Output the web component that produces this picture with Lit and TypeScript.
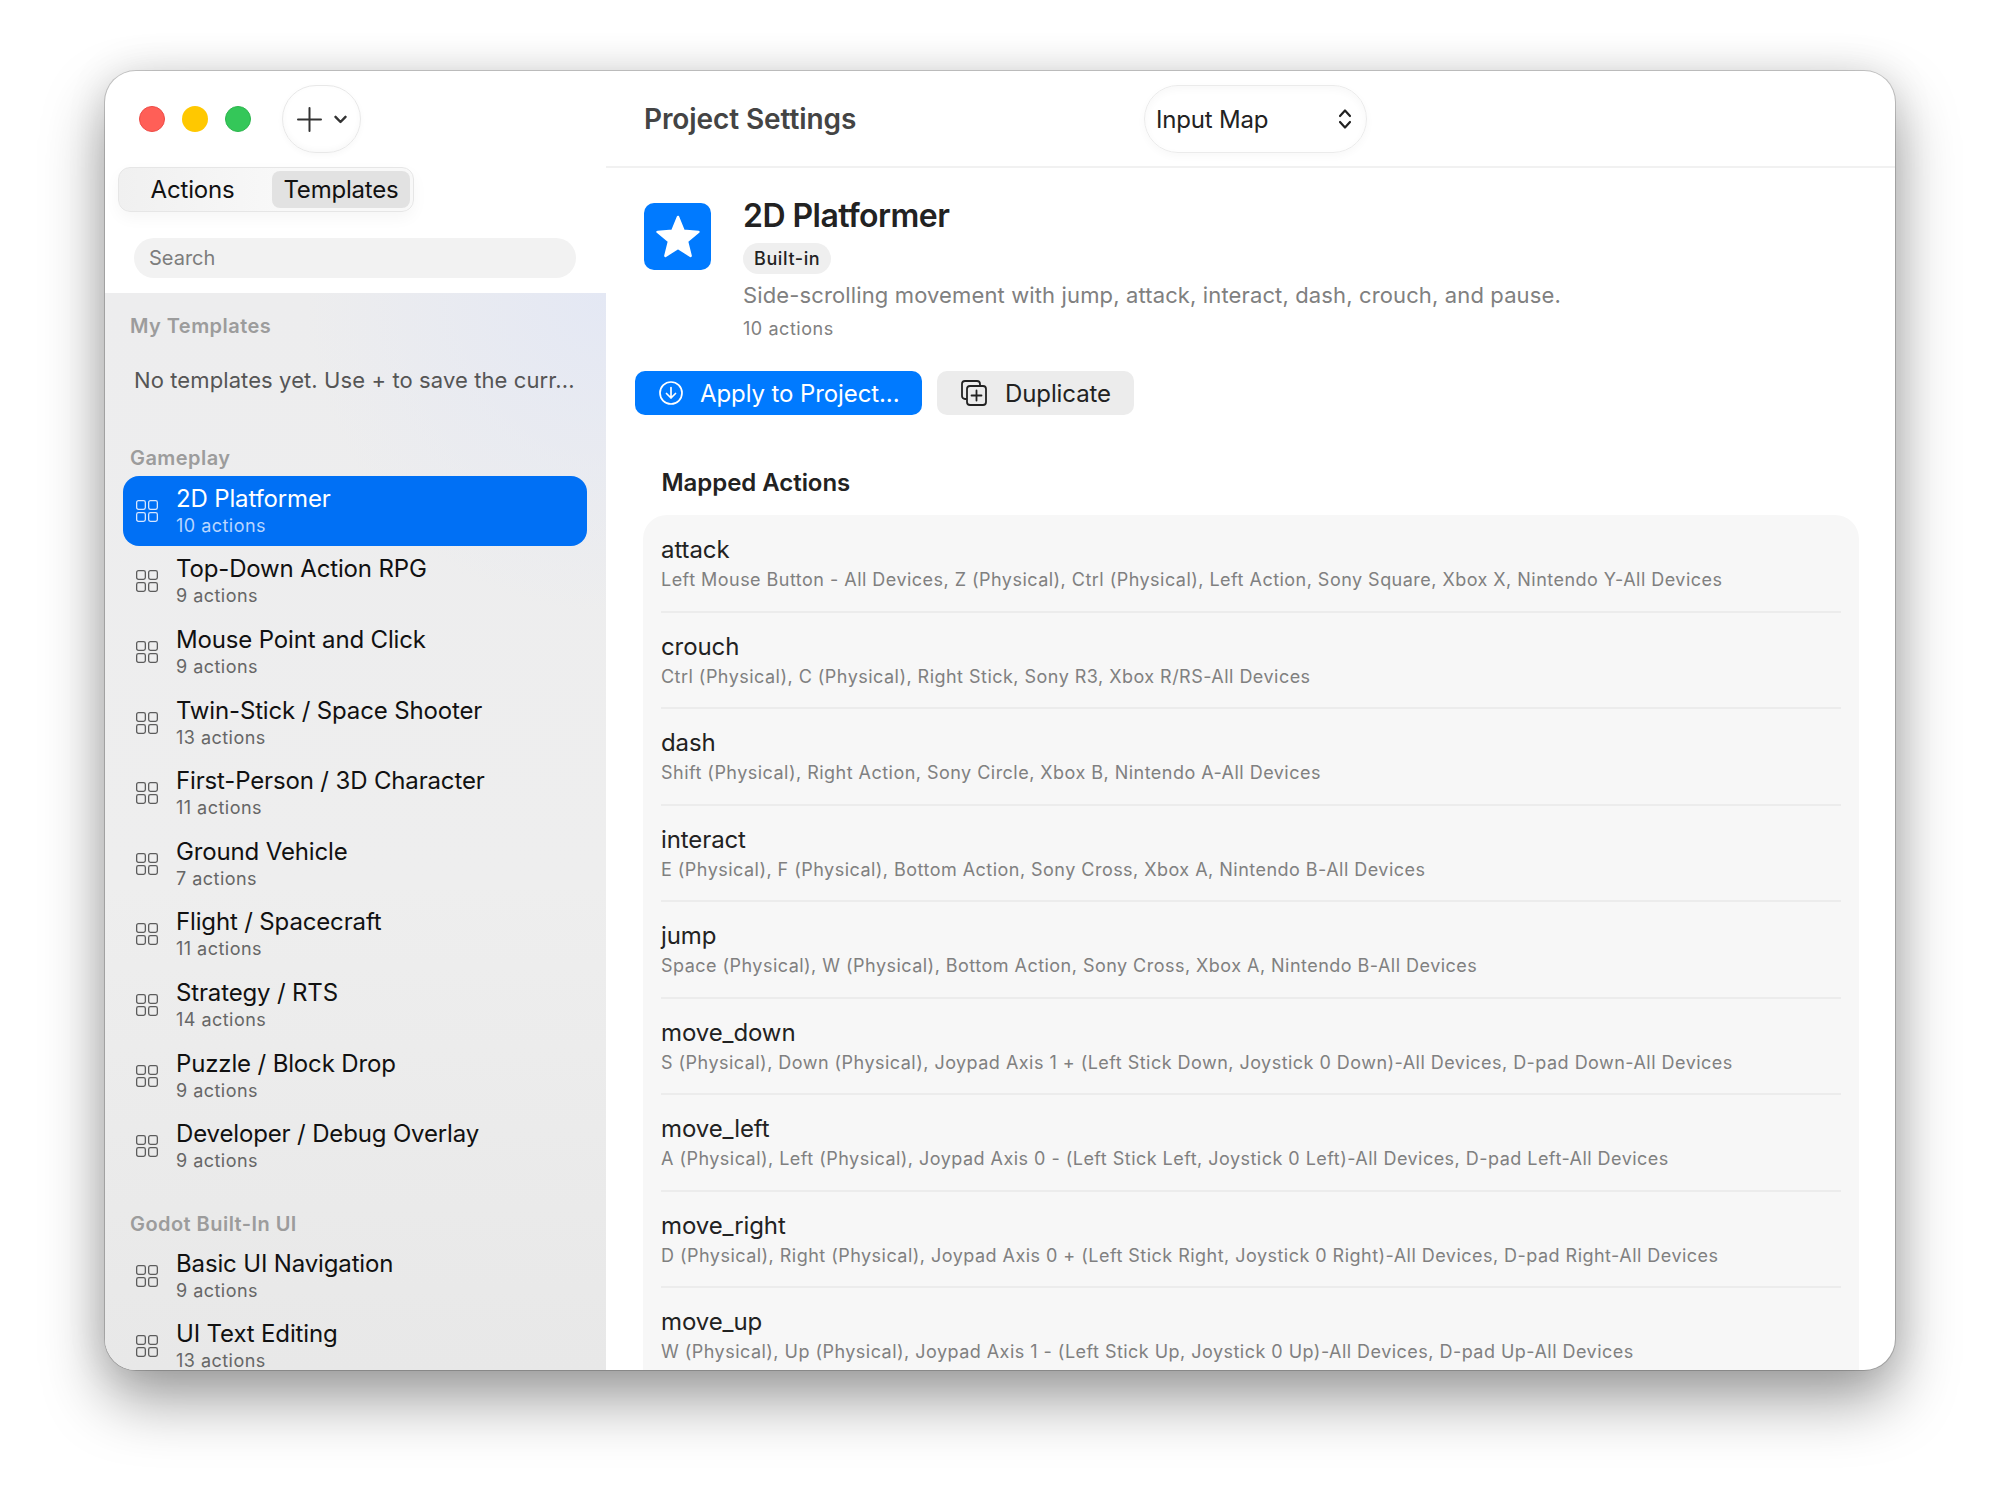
import { LitElement, css, html } from "lit";
import { customElement } from "lit/decorators.js";

const gameplay = [
    ["2D Platformer", "10 actions"],
    ["Top-Down Action RPG", "9 actions"],
    ["Mouse Point and Click", "9 actions"],
    ["Twin-Stick / Space Shooter", "13 actions"],
    ["First-Person / 3D Character", "11 actions"],
    ["Ground Vehicle", "7 actions"],
    ["Flight / Spacecraft", "11 actions"],
    ["Strategy / RTS", "14 actions"],
    ["Puzzle / Block Drop", "9 actions"],
    ["Developer / Debug Overlay", "9 actions"],
];

const builtin = [
    ["Basic UI Navigation", "9 actions"],
    ["UI Text Editing", "13 actions"],
];

const actions = [
    ["attack", "Left Mouse Button - All Devices, Z (Physical), Ctrl (Physical), Left Action, Sony Square, Xbox X, Nintendo Y-All Devices"],
    ["crouch", "Ctrl (Physical), C (Physical), Right Stick, Sony R3, Xbox R/RS-All Devices"],
    ["dash", "Shift (Physical), Right Action, Sony Circle, Xbox B, Nintendo A-All Devices"],
    ["interact", "E (Physical), F (Physical), Bottom Action, Sony Cross, Xbox A, Nintendo B-All Devices"],
    ["jump", "Space (Physical), W (Physical), Bottom Action, Sony Cross, Xbox A, Nintendo B-All Devices"],
    ["move_down", "S (Physical), Down (Physical), Joypad Axis 1 + (Left Stick Down, Joystick 0 Down)-All Devices, D-pad Down-All Devices"],
    ["move_left", "A (Physical), Left (Physical), Joypad Axis 0 - (Left Stick Left, Joystick 0 Left)-All Devices, D-pad Left-All Devices"],
    ["move_right", "D (Physical), Right (Physical), Joypad Axis 0 + (Left Stick Right, Joystick 0 Right)-All Devices, D-pad Right-All Devices"],
    ["move_up", "W (Physical), Up (Physical), Joypad Axis 1 - (Left Stick Up, Joystick 0 Up)-All Devices, D-pad Up-All Devices"],
];

const gridIcon = html`<svg class="grid" viewBox="0 0 22 22" width="22" height="22" fill="none" stroke="currentColor" stroke-width="1.3">
    <rect x=".65" y=".65" width="8.7" height="8.7" rx="1.8"></rect>
    <rect x="12.65" y=".65" width="8.7" height="8.7" rx="1.8"></rect>
    <rect x=".65" y="12.65" width="8.7" height="8.7" rx="1.8"></rect>
    <rect x="12.65" y="12.65" width="8.7" height="8.7" rx="1.8"></rect>
</svg>`;

@customElement("app-root")
export class AppRoot extends LitElement {
    static styles = css`
    :host {
        display: block;
        background: #fff;
        padding: 71px 105px 138px;
        font-family: Inter, "Liberation Sans", sans-serif;
        color: #111;
    }

    .window {
        height: 1299px;
        display: flex;
        background: #fff;
        border-radius: 31px;
        overflow: hidden;
        box-shadow: 0 0 0 1px rgba(0, 0, 0, .18), 0 30px 62px rgba(0, 0, 0, .38), 0 0 40px rgba(0, 0, 0, .1);
    }

    .sidebar {
        width: 501px;
        flex: none;
        display: flex;
        flex-direction: column;
        overflow: hidden;
    }

    .chrome {
        height: 222px;
        flex: none;
        box-sizing: border-box;
        padding: 14px 13px 0;
    }

    .toolbar {
        display: flex;
        align-items: center;
        height: 68px;
    }

    .light {
        width: 26px;
        height: 26px;
        border-radius: 50%;
        margin-right: 17px;
        box-sizing: border-box;
    }

    .light:first-child { margin-left: 21px; }
    .red { background: #ff5f57; border: 1px solid #ee4a45; }
    .yellow { background: #ffc800; }
    .green { background: #34c759; border: 1px solid #2cb54d; }

    .add {
        margin-left: 14px;
        width: 79px;
        height: 68px;
        box-sizing: border-box;
        border-radius: 34px;
        border: 1px solid #e8e8e8;
        box-shadow: inset 0 -2px 6px rgba(0, 0, 0, .03), 0 2px 6px rgba(0, 0, 0, .03);
        display: flex;
        align-items: center;
        justify-content: center;
        gap: 12px;
        color: #333;
    }

    .segments {
        margin-top: 14px;
        width: 296px;
        height: 45px;
        box-sizing: border-box;
        border: 1px solid #e6e6e6;
        border-radius: 12px;
        padding: 3px;
        background: linear-gradient(90deg, #f0f0f0, #f8f8f8 55%, #f8f8f8);
        box-shadow: 0 6px 16px rgba(0, 0, 0, .04);
        display: flex;
        font-size: 24px;
        line-height: 37px;
        letter-spacing: -.2px;
    }

    .segments span {
        text-align: center;
        border-radius: 8px;
    }

    .segments .tab { width: 150px; padding-right: 9px; box-sizing: border-box; }
    .segments .on { width: 138px; background: #e2e2e2; }

    .search {
        margin: 26px 17px 0 16px;
        height: 40px;
        box-sizing: border-box;
        border-radius: 20px;
        background: #f2f2f2;
        padding-left: 15px;
        font-size: 20px;
        line-height: 40px;
        color: #7d7d7d;
    }

    .list {
        flex: 1;
        min-height: 0;
        overflow: hidden;
        background: radial-gradient(ellipse 300px 320px at 100% 0, #e4e8f4, rgba(228, 232, 244, 0)), linear-gradient(180deg, #ededee, #eeeeee 55%, #e8e8e8);
        padding: 20px 19px 0 18px;
    }

    .heading {
        font-size: 20px;
        line-height: 26px;
        font-weight: 600;
        color: #9c9c9c;
        padding-left: 7px;
        letter-spacing: .45px;
    }

    .empty {
        font-size: 22px;
        line-height: 28px;
        color: #555;
        padding: 27px 0 0 11px;
        height: 105.5px;
        box-sizing: border-box;
        white-space: nowrap;
        overflow: hidden;
        letter-spacing: .1px;
    }

    .rows { margin-top: 5px; display: flex; flex-direction: column; }
    .rows + .heading { margin-top: 29.3px; }
    .rows.last { margin-top: 3.7px; }

    .item {
        height: 70.6px;
        box-sizing: border-box;
        border-radius: 16px;
        display: flex;
        align-items: center;
        padding-left: 13px;
        color: #5c5c5c;
    }

    .item .grid { flex: none; margin-right: 18px; }
    .item b { display: block; font-weight: 400; font-size: 24px; line-height: 28px; color: #111; white-space: nowrap; letter-spacing: -.15px; }
    .item small { display: block; font-size: 18px; line-height: 22px; margin-top: 2px; color: #666; letter-spacing: .47px; }
    .item.sel { background: #0070f5; color: #d6e6ff; }
    .item.sel b { color: #fff; }
    .item.sel small { color: #b9d6ff; }

    main {
        flex: 1;
        min-width: 0;
        display: flex;
        flex-direction: column;
        overflow: hidden;
    }

    .top {
        height: 97px;
        flex: none;
        box-sizing: border-box;
        padding: 14px 0 0 38px;
        border-bottom: 2px solid #f1f1f1;
        display: flex;
        align-items: flex-start;
    }

    .top h1 {
        margin: 0;
        width: 500px;
        font-size: 28px;
        line-height: 69px;
        font-weight: 600;
        color: #444;
        letter-spacing: -.1px;
    }

    .picker {
        width: 223px;
        height: 68px;
        box-sizing: border-box;
        border: 1px solid #ebebeb;
        border-radius: 34px;
        box-shadow: inset 0 3px 8px rgba(0, 0, 0, .03), 0 3px 8px rgba(0, 0, 0, .03);
        display: flex;
        align-items: center;
        justify-content: space-between;
        padding: 0 14px 0 11px;
        font-size: 24px;
        letter-spacing: -.2px;
        color: #222;
    }

    .summary {
        padding: 35px 0 0 38px;
        display: flex;
        gap: 32px;
    }

    .badge {
        width: 67px;
        height: 67px;
        flex: none;
        border-radius: 10px;
        background: #007aff;
        display: flex;
        align-items: center;
        justify-content: center;
    }

    .summary h2 {
        margin: 0;
        font-size: 32px;
        line-height: 36px;
        font-weight: 600;
        color: #222;
        letter-spacing: -.55px;
        position: relative;
        top: -5px;
    }

    .chip {
        display: inline-block;
        margin-top: 4px;
        height: 31px;
        line-height: 31px;
        padding: 0 11px;
        border-radius: 16px;
        background: #efefef;
        font-size: 18px;
        font-weight: 500;
        color: #222;
        letter-spacing: .6px;
    }

    .desc {
        font-size: 22px;
        line-height: 30px;
        margin-top: 6px;
        color: #808080;
        letter-spacing: .13px;
    }

    .count {
        font-size: 18px;
        line-height: 24px;
        margin-top: 7px;
        color: #808080;
        letter-spacing: .55px;
    }

    .buttons {
        padding: 30px 0 0 29px;
        display: flex;
        gap: 15px;
        flex: none;
    }

    .btn {
        height: 44px;
        border-radius: 10px;
        display: flex;
        align-items: center;
        box-sizing: border-box;
        font-size: 24px;
        letter-spacing: -.1px;
    }

    .apply { width: 287px; background: #007aff; color: #fff; padding-left: 24px; gap: 17px; }
    .dup { width: 197px; background: #ececec; color: #222; padding-left: 24px; gap: 18px; }

    .mapped {
        margin: 52px 0 0 55.5px;
        font-size: 24px;
        line-height: 32px;
        font-weight: 600;
        color: #222;
        letter-spacing: -.05px;
    }

    .panel {
        margin: 16px 36px 0 37px;
        background: #f7f7f7;
        border-radius: 24px 24px 0 0;
        padding: 1px 18px 0;
        flex: none;
    }

    .action {
        height: 96.5px;
        box-sizing: border-box;
        padding-top: 18px;
        border-bottom: 2px solid #ececec;
    }

    .action:last-child { border-bottom: none; }
    .action b { display: block; font-weight: 400; font-size: 24px; line-height: 32px; color: #222; letter-spacing: -.1px; }
    .action small { display: block; font-size: 18px; line-height: 24px; margin-top: 2px; color: #808080; white-space: nowrap; letter-spacing: .47px; }
    `;

    renderItem(item: string[], selected = false) {
        return html`
        <div class="item ${selected ? "sel" : ""}">
            ${gridIcon}
            <div><b>${item[0]}</b><small>${item[1]}</small></div>
        </div>
        `;
    }

    render() {
        return html`
        <div class="window">
            <div class="sidebar">
                <div class="chrome">
                    <div class="toolbar">
                        <div class="light red"></div>
                        <div class="light yellow"></div>
                        <div class="light green"></div>
                        <div class="add">
                            <svg width="25" height="25" viewBox="0 0 25 25" fill="none" stroke="currentColor" stroke-width="2" stroke-linecap="round"><path d="M12.5 1v23M1 12.5h23"></path></svg>
                            <svg width="13" height="9" viewBox="0 0 13 9" fill="none" stroke="currentColor" stroke-width="2.4" stroke-linecap="round" stroke-linejoin="round"><path d="M1.5 1.8 6.5 7l5-5.2"></path></svg>
                        </div>
                    </div>
                    <div class="segments">
                        <span class="tab">Actions</span>
                        <span class="on">Templates</span>
                    </div>
                    <div class="search">Search</div>
                </div>
                <div class="list">
                    <div class="heading">My Templates</div>
                    <div class="empty">No templates yet. Use + to save the curr...</div>
                    <div class="heading">Gameplay</div>
                    <div class="rows">
                        ${gameplay.map((g, i) => this.renderItem(g, i === 0))}
                    </div>
                    <div class="heading">Godot Built-In UI</div>
                    <div class="rows last">
                        ${builtin.map((g) => this.renderItem(g))}
                    </div>
                </div>
            </div>
            <main>
                <div class="top">
                    <h1>Project Settings</h1>
                    <div class="picker">
                        <span>Input Map</span>
                        <svg width="14" height="22" viewBox="0 0 14 22" fill="none" stroke="#222" stroke-width="2.2" stroke-linecap="round" stroke-linejoin="round"><path d="M2 8 7 2.5 12 8M2 14l5 5.5 5-5.5"></path></svg>
                    </div>
                </div>
                <div class="summary">
                    <div class="badge">
                        <svg width="46" height="44" viewBox="0 0 46 44"><path d="M23 2 28.6 15.8 43.4 16.9 32 26.4 35.600 40.900 23 33 10.400 40.900 14 26.400 2.600 16.900 17.400 15.800Z" fill="#fff" stroke="#fff" stroke-width="2.5" stroke-linejoin="round"></path></svg>
                    </div>
                    <div>
                        <h2>2D Platformer</h2>
                        <div class="chip">Built-in</div>
                        <div class="desc">Side-scrolling movement with jump, attack, interact, dash, crouch, and pause.</div>
                        <div class="count">10 actions</div>
                    </div>
                </div>
                <div class="buttons">
                    <div class="btn apply">
                        <svg width="24" height="24" viewBox="0 0 24 24" fill="none" stroke="#fff" stroke-width="1.7" stroke-linecap="round" stroke-linejoin="round"><circle cx="12" cy="12" r="11"></circle><path d="M12 6.5v10.5M7.5 12.5 12 17l4.5-4.5"></path></svg>
                        <span>Apply to Project...</span>
                    </div>
                    <div class="btn dup">
                        <svg width="26" height="26" viewBox="0 0 26 26" fill="none" stroke="#222" stroke-width="1.8" stroke-linecap="round" stroke-linejoin="round"><path d="M5 19H4a3 3 0 0 1-3-3V4a3 3 0 0 1 3-3h12a3 3 0 0 1 3 3v1"></path><rect x="6" y="6" width="19" height="19" rx="3"></rect><path d="M15.5 10.5v10M10.500 15.500h10"></path></svg>
                        <span>Duplicate</span>
                    </div>
                </div>
                <div class="mapped">Mapped Actions</div>
                <div class="panel">
                    ${actions.map((a) => html`
                    <div class="action">
                        <b>${a[0]}</b>
                        <small>${a[1]}</small>
                    </div>
                    `)}
                </div>
            </main>
        </div>
        `;
    }
}

declare global {
    interface HTMLElementTagNameMap {
        "app-root": AppRoot
    }
}
